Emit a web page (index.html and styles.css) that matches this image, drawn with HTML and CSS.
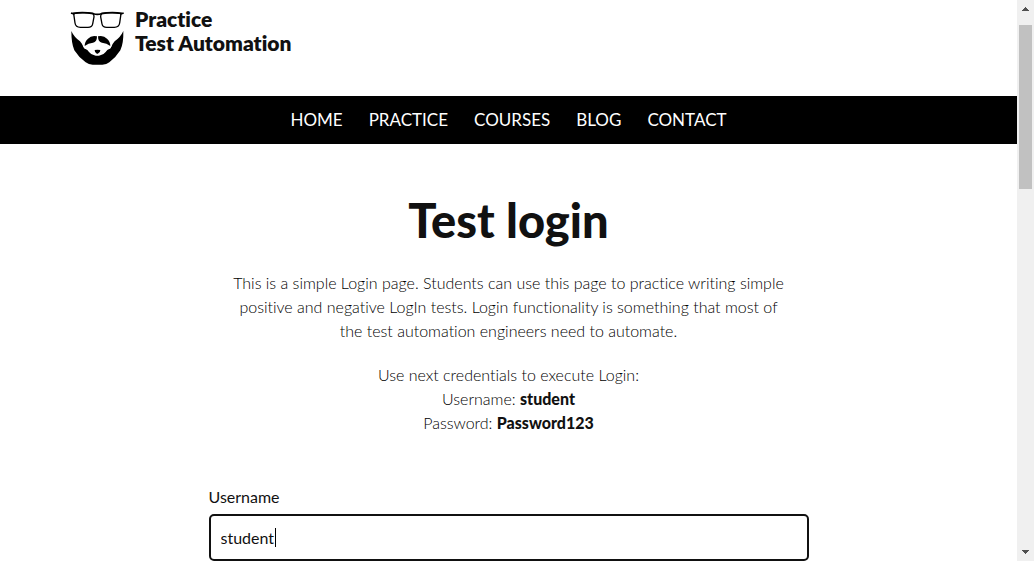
FILE: index.html
```html
<!DOCTYPE html>
<html lang="en">
<head>
<meta charset="utf-8">
<title>Test login</title>
<link rel="stylesheet" href="styles.css">
</head>
<body>
<div class="viewport">
  <div class="page">
    <header class="site-header">
      <a class="brand" href="#">
        <svg class="logo" viewBox="30 33 162 162" aria-hidden="true">
          <g fill="none" stroke="#000" stroke-width="4">
            <path d="M41 41Q70 35 98 40Q104 44 101 56L98 72Q96 82 84 82H61Q47 82 45 69Z"/>
            <path d="M183 41Q154 35 126 40Q120 44 123 56L126 72Q128 82 140 82H163Q177 82 179 69Z"/>
            <path d="M33 39L44 43M191 39L180 43M38 40Q70 35 100 41Q112 45 124 41Q154 35 186 40" stroke-width="5"/>
          </g>
          <path d="M34 93Q42 111 60 124Q66 131 70 140Q74 148 84 149Q98 138 112 143Q126 138 140 149Q150 148 154 140Q158 131 164 124Q182 111 190 93Q191 130 181 151Q168 172 148 187Q140 194 127 194H98Q86 194 77 187Q56 172 43 151Q34 130 34 93Z"/>
          <path fill="#fff" d="M64 119H160L152 145Q142 147 137 156Q131 164 121 166Q112 169 103 166Q93 164 87 156Q82 147 72 145Z"/>
          <path d="M111 109Q94 105 84 116Q74 124 74 138Q85 129 99 128Q111 126 111 109ZM114 109Q131 105 141 116Q151 124 151 138Q140 129 126 128Q114 126 114 109Z"/>
          <path d="M104 150Q112 148 121 150Q121 157 115 160Q112 163 109 160Q104 157 104 150Z"/>
        </svg>
        <span class="brand-name">Practice<br>Test Automation</span>
      </a>
    </header>
    <nav class="menu">
      <a href="#">HOME</a>
      <a href="#">PRACTICE</a>
      <a href="#">COURSES</a>
      <a href="#">BLOG</a>
      <a href="#">CONTACT</a>
    </nav>
    <main class="content">
      <h1>Test login</h1>
      <p>This is a simple Login page. Students can use this page to practice writing simple positive and negative LogIn tests. Login functionality is something that most of the test automation engineers need to automate.</p>
      <p>Use next credentials to execute Login:<br>Username: <strong>student</strong><br>Password: <strong>Password123</strong></p>
      <form class="login">
        <label for="username">Username</label>
        <div class="field">
          <input id="username" type="text" value="student">
          <span class="caret"></span>
        </div>
      </form>
    </main>
  </div>
  <div class="scrollbar" aria-hidden="true">
    <svg class="arrow" viewBox="0 0 7 4" shape-rendering="crispEdges"><path d="M3 0h1v1h1v1h1v1h1v1H0V3h1V2h1V1h1z"/></svg>
    <div class="track"><div class="thumb"></div></div>
    <svg class="arrow" viewBox="0 0 7 4" shape-rendering="crispEdges"><path d="M0 0h7v1H6v1H5v1H4v1H3V3H2V2H1V1H0z"/></svg>
  </div>
</div>
</body>
</html>
```
FILE: styles.css
```css
* {
  box-sizing: border-box;
}

body {
  margin: 0;
  background: #fff;
  color: #111;
  font-family: Lato, "Liberation Sans", sans-serif;
  font-size: 16px;
  font-variant-ligatures: none;
  line-height: 24px;
}

.viewport {
  display: flex;
  height: 100vh;
  overflow: hidden;
}

.page {
  flex: 1;
  overflow: hidden;
}

.site-header {
  display: flex;
  padding: 7px 70px 31px;
}

.brand {
  display: flex;
  align-items: flex-start;
  gap: 11px;
  color: #111;
  text-decoration: none;
}

.logo {
  width: 54px;
  height: 54px;
  margin-top: 4px;
}

.brand-name {
  font-size: 21px;
  font-weight: 800;
}

.menu {
  display: flex;
  justify-content: center;
  gap: 26px;
  padding: 12px;
  background: #000;
}

.menu a {
  color: #fff;
  font-size: 17px;
  font-weight: 400;
  text-decoration: none;
}

.content {
  max-width: 600px;
  margin: 0 auto;
  padding-top: 48px;
  text-align: center;
}

h1 {
  margin: 0 0 23px;
  font-size: 47px;
  font-weight: 900;
  line-height: 56px;
}

p {
  margin: 0 20px 20px;
  color: #000;
  font-weight: 300;
}

strong {
  color: #111;
  font-weight: 900;
}

.login {
  margin-top: 50px;
  text-align: left;
}

label {
  display: block;
  margin-bottom: 5px;
}

.field {
  position: relative;
}

.field input {
  display: block;
  width: 100%;
  height: 47px;
  padding: 0 10px;
  border: 2px solid #111;
  border-radius: 5px;
  outline: none;
  background: #fff;
  color: #111;
  font: inherit;
}

.caret {
  position: absolute;
  top: 14px;
  left: 66px;
  width: 1px;
  height: 19px;
  background: #000;
}

.scrollbar {
  display: flex;
  flex-direction: column;
  align-items: center;
  width: 17px;
  padding: 7px 2px;
  background: #f0f0f0;
}

.arrow {
  width: 7px;
  height: 4px;
  fill: #505050;
}

.track {
  flex: 1;
  width: 100%;
  padding: 14px 0;
}

.thumb {
  height: 32%;
  background: #c1c1c1;
}
```
